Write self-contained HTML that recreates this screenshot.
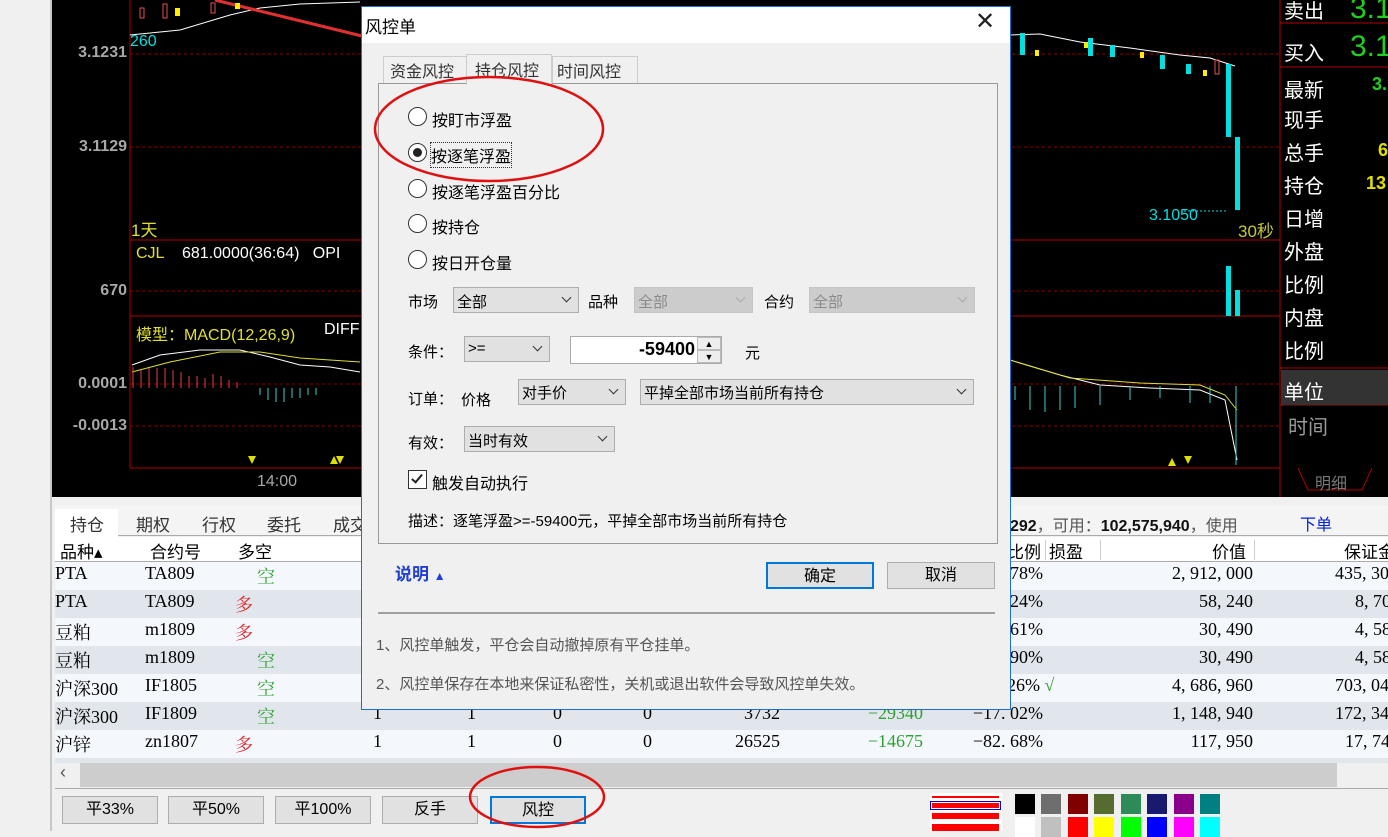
<!DOCTYPE html>
<html><head><meta charset="utf-8">
<style>
*{margin:0;padding:0;box-sizing:border-box}
body{width:1388px;height:831px;position:relative;overflow:hidden;background:#f0f0f0;font-family:"Liberation Sans","Noto Sans CJK SC",sans-serif}
.a{position:absolute;white-space:nowrap}
.ax{color:#a8a8a8;font-weight:bold;font-size:16px;text-align:right;width:80px}
.rl{color:#fff;font-size:20px;left:1284px}
.serif{font-family:"Liberation Serif","Noto Serif CJK SC",serif}
.row{position:absolute;left:55px;width:1333px;height:28px;font-size:18px;overflow:hidden}
.row span{position:absolute;top:1px;white-space:nowrap}
.dk{font-size:15px;color:#000}
.sel{position:absolute;height:26px;background:#e1e1e1;border:1px solid #adadad;font-size:15px;padding:3px 0 0 3px;white-space:nowrap}
.sel i{position:absolute;right:8px;top:6px;width:7px;height:7px;border-right:1.3px solid #333;border-bottom:1.3px solid #333;transform:rotate(45deg)}
.dis{background:#ccc;color:#8a8a8a;border-color:#c4c4c4}
.dis i{border-color:#aaa}
.rad{position:absolute;left:408px;width:19px;height:19px;border:1px solid #333;border-radius:50%;background:#fff}
.btn{position:absolute;height:28px;background:#e1e1e1;border:1px solid #adadad;font-size:16px;text-align:center;line-height:26px}
.sw{position:absolute;width:20px;height:20px}
</style></head><body>
<div class="a" style="left:50px;top:0;width:2px;height:831px;background:#c8c8c8"></div>
<div class="a" style="left:52px;top:0;width:1336px;height:497px;background:#000"></div>
<svg class="a" style="left:0;top:0" width="1388" height="497">
<g stroke="#b00000" stroke-width="1">
<line x1="130" y1="0" x2="130" y2="468"/>
<line x1="130" y1="240" x2="1280" y2="240"/>
<line x1="130" y1="316" x2="1280" y2="316"/>
<line x1="130" y1="468" x2="1280" y2="468"/>
<line x1="1280" y1="0" x2="1280" y2="497"/>
<line x1="1280" y1="23" x2="1388" y2="23"/>
<line x1="1280" y1="67" x2="1388" y2="67"/>
<line x1="1280" y1="368" x2="1388" y2="368"/>
<line x1="1280" y1="405" x2="1388" y2="405"/>
</g>
<g stroke="#8a0000" stroke-dasharray="3,3">
<line x1="130" y1="54" x2="1280" y2="54"/><line x1="130" y1="147" x2="1280" y2="147"/>
<line x1="130" y1="291" x2="1280" y2="291"/><line x1="130" y1="384" x2="1280" y2="384"/><line x1="130" y1="426" x2="1280" y2="426"/>
</g>
<polyline points="130,35 180,30 230,15 260,8 300,4 360,2" stroke="#fff" fill="none"/>
<line x1="215" y1="0" x2="362" y2="36" stroke="#e03030" stroke-width="3"/>
<polyline points="1010,35 1040,34 1080,42 1130,48 1180,55 1210,58 1235,66" stroke="#fff" fill="none"/>
<g fill="#00e0e0">
<rect x="1226" y="64" width="5" height="73"/><rect x="1235" y="137" width="5" height="73"/>
<rect x="1226" y="266" width="5" height="50"/><rect x="1235" y="290" width="5" height="26"/>
<rect x="1020" y="33" width="5" height="22"/><rect x="1088" y="38" width="5" height="18"/><rect x="1186" y="64" width="5" height="10"/>
<rect x="1110" y="45" width="5" height="12"/><rect x="1160" y="55" width="5" height="14"/>
</g>
<g fill="#ffee00"><rect x="1035" y="50" width="4" height="6"/><rect x="1084" y="42" width="4" height="6"/><rect x="1203" y="70" width="4" height="6"/><rect x="175" y="8" width="5" height="8"/><rect x="235" y="3" width="5" height="6"/><rect x="1140" y="52" width="4" height="6"/></g>
<g stroke="#e05050" fill="none"><rect x="140" y="8" width="4" height="10"/><rect x="163" y="4" width="4" height="14"/><rect x="211" y="3" width="4" height="10"/><rect x="1215" y="60" width="4" height="14"/></g>
<line x1="1184" y1="211" x2="1228" y2="211" stroke="#00e0e0" stroke-dasharray="2,2"/>
<polyline points="132,365 160,355 200,350 240,350 270,357 300,365 330,367 360,372" stroke="#fff" fill="none"/>
<polyline points="132,372 170,362 220,352 260,352 300,358 360,362" stroke="#dddd30" fill="none"/>
<polyline points="1010,360 1060,375 1100,385 1150,388 1200,390 1225,400 1237,460" stroke="#fff" fill="none"/>
<polyline points="1010,360 1070,378 1140,383 1200,385 1225,395 1237,410" stroke="#dddd30" fill="none"/>
<g stroke="#e04040"><line x1="133" y1="367" x2="133" y2="388"/><line x1="141" y1="370" x2="141" y2="388"/><line x1="149" y1="368" x2="149" y2="388"/><line x1="157" y1="368" x2="157" y2="388"/><line x1="165" y1="368" x2="165" y2="388"/><line x1="173" y1="370" x2="173" y2="388"/><line x1="181" y1="372" x2="181" y2="388"/><line x1="189" y1="376" x2="189" y2="388"/><line x1="197" y1="376" x2="197" y2="388"/><line x1="205" y1="378" x2="205" y2="388"/><line x1="213" y1="374" x2="213" y2="388"/><line x1="221" y1="376" x2="221" y2="388"/><line x1="229" y1="380" x2="229" y2="388"/><line x1="237" y1="382" x2="237" y2="388"/></g>
<g stroke="#40d0d0"><line x1="260" y1="388" x2="260" y2="395"/><line x1="268" y1="388" x2="268" y2="400"/><line x1="276" y1="388" x2="276" y2="402"/><line x1="284" y1="388" x2="284" y2="402"/><line x1="292" y1="388" x2="292" y2="398"/><line x1="300" y1="388" x2="300" y2="398"/><line x1="308" y1="388" x2="308" y2="395"/><line x1="316" y1="388" x2="316" y2="395"/>
<line x1="1015" y1="386" x2="1015" y2="400"/><line x1="1030" y1="386" x2="1030" y2="410"/><line x1="1045" y1="386" x2="1045" y2="412"/><line x1="1060" y1="386" x2="1060" y2="410"/><line x1="1075" y1="386" x2="1075" y2="408"/><line x1="1100" y1="386" x2="1100" y2="405"/><line x1="1130" y1="386" x2="1130" y2="400"/><line x1="1160" y1="386" x2="1160" y2="398"/><line x1="1190" y1="386" x2="1190" y2="403"/><line x1="1210" y1="386" x2="1210" y2="403"/><line x1="1236" y1="386" x2="1236" y2="465"/></g>
<g fill="#e0e000"><polygon points="248,456 256,456 252,464"/><polygon points="330,464 338,464 334,456"/><polygon points="336,456 344,456 340,464"/><polygon points="1168,466 1176,466 1172,458"/><polygon points="1184,456 1192,456 1188,464"/></g>
<polyline points="1298,468 1308,490 1362,490 1372,468" stroke="#b00000" fill="none"/>
</svg>
<div class="a ax" style="left:47px;top:44px">3.1231</div>
<div class="a ax" style="left:47px;top:138px">3.1129</div>
<div class="a ax" style="left:47px;top:282px">670</div>
<div class="a ax" style="left:47px;top:375px">0.0001</div>
<div class="a ax" style="left:47px;top:417px">-0.0013</div>
<div class="a" style="left:130px;top:33px;color:#00e0e0;font-size:16px">260</div>
<div class="a" style="left:131px;top:216px;color:#e0e030;font-size:17px">1天</div>
<div class="a" style="left:136px;top:245px;color:#e0e030;font-size:16px">CJL</div>
<div class="a" style="left:182px;top:245px;color:#fff;font-size:16px">681.0000(36:64) &nbsp;&nbsp;OPI</div>
<div class="a" style="left:136px;top:321px;color:#e0e030;font-size:16px">模型：MACD(12,26,9)</div>
<div class="a" style="left:324px;top:321px;color:#fff;font-size:16px">DIFF</div>
<div class="a" style="left:257px;top:473px;color:#a8a8a8;font-size:16px">14:00</div>
<div class="a" style="left:1149px;top:207px;color:#00e0e0;font-size:16px">3.1050</div>
<div class="a" style="left:1238px;top:217px;color:#c8c830;font-size:17px">30秒</div>
<div class="a" style="left:1281px;top:370px;width:107px;height:35px;background:#333"></div>
<div class="a rl" style="top:-5px">卖出</div>
<div class="a rl" style="top:37px">买入</div>
<div class="a rl" style="top:74px">最新</div>
<div class="a rl" style="top:104px">现手</div>
<div class="a rl" style="top:137px">总手</div>
<div class="a rl" style="top:170px">持仓</div>
<div class="a rl" style="top:203px">日增</div>
<div class="a rl" style="top:236px">外盘</div>
<div class="a rl" style="top:269px">比例</div>
<div class="a rl" style="top:302px">内盘</div>
<div class="a rl" style="top:335px">比例</div>
<div class="a rl" style="top:376px">单位</div>
<div class="a rl" style="top:411px;color:#999;left:1288px">时间</div>
<div class="a" style="left:1350px;top:-8px;color:#20d020;font-size:30px">3.1</div>
<div class="a" style="left:1350px;top:30px;color:#20d020;font-size:30px">3.1</div>
<div class="a" style="left:1372px;top:74px;color:#20d020;font-size:18px;font-weight:bold">3.</div>
<div class="a" style="left:1378px;top:140px;color:#e0e000;font-size:18px;font-weight:bold">6</div>
<div class="a" style="left:1366px;top:173px;color:#e0e000;font-size:18px;font-weight:bold">13</div>
<div class="a" style="left:1315px;top:470px;color:#777;font-size:16px">明细</div>

<div class="a" style="left:52px;top:497px;width:1336px;height:334px;background:#f0f0f0"></div>
<div class="a" style="left:55px;top:505px;width:1333px;height:31px;background:#f4f4f4;border-bottom:1px solid #aaa"></div>
<div class="a" style="left:55px;top:509px;width:63px;height:28px;background:#fff"></div>
<div class="a" style="left:70px;top:511px;font-size:17px;color:#333">持仓</div>
<div class="a" style="left:136px;top:511px;font-size:17px;color:#333">期权</div>
<div class="a" style="left:202px;top:511px;font-size:17px;color:#333">行权</div>
<div class="a" style="left:267px;top:511px;font-size:17px;color:#333">委托</div>
<div class="a" style="left:333px;top:511px;font-size:17px;color:#333">成交</div>
<div class="a" style="left:1010px;top:512px;font-size:16px;color:#555"><b style="color:#111">292</b>，可用：<b style="color:#111">102,575,940</b>，使用</div>
<div class="a" style="left:1300px;top:511px;font-size:16px;color:#0020e0">下单</div>
<div class="a" style="left:55px;top:537px;width:1333px;height:25px;background:#fff;border-bottom:1px solid #aaa"></div>
<div class="a" style="left:60px;top:538px;font-size:17px">品种▴</div>
<div class="a" style="left:150px;top:538px;font-size:17px">合约号</div>
<div class="a" style="left:238px;top:538px;font-size:17px">多空</div>
<div class="a" style="left:1007px;top:538px;font-size:17px">比例</div>
<div class="a" style="left:1049px;top:538px;font-size:17px">损盈</div>
<div class="a" style="left:1212px;top:538px;font-size:17px">价值</div>
<div class="a" style="left:1344px;top:538px;font-size:17px">保证金</div>
<div class="a" style="left:1045px;top:540px;width:1px;height:20px;background:#ccc"></div>
<div class="a" style="left:1100px;top:540px;width:1px;height:20px;background:#ccc"></div>
<div class="a" style="left:1254px;top:540px;width:1px;height:20px;background:#ccc"></div>
<div class="serif">
<div class="row" style="top:562px;background:#f4f7fc"><span style="left:0">PTA</span><span style="left:90px">TA809</span><span style="left:202px;color:#30a030">空</span><span style="right:345px">78%</span><span style="right:135px">2, 912, 000</span><span style="left:1280px">435, 30</span></div>
<div class="row" style="top:590px;background:#e1e6ec"><span style="left:0">PTA</span><span style="left:90px">TA809</span><span style="left:180px;color:#e02020">多</span><span style="right:345px">24%</span><span style="right:135px">58, 240</span><span style="left:1300px">8, 70</span></div>
<div class="row" style="top:618px;background:#f4f7fc"><span style="left:0">豆粕</span><span style="left:90px">m1809</span><span style="left:180px;color:#e02020">多</span><span style="right:345px">61%</span><span style="right:135px">30, 490</span><span style="left:1300px">4, 58</span></div>
<div class="row" style="top:646px;background:#e1e6ec"><span style="left:0">豆粕</span><span style="left:90px">m1809</span><span style="left:202px;color:#30a030">空</span><span style="right:345px">90%</span><span style="right:135px">30, 490</span><span style="left:1300px">4, 58</span></div>
<div class="row" style="top:674px;background:#f4f7fc"><span style="left:0">沪深300</span><span style="left:90px">IF1805</span><span style="left:202px;color:#30a030">空</span><span style="left:952px">26% <b style="color:#30a030;font-weight:normal">√</b></span><span style="right:135px">4, 686, 960</span><span style="left:1280px">703, 04</span></div>
<div class="row" style="top:702px;background:#e1e6ec"><span style="left:0">沪深300</span><span style="left:90px">IF1809</span><span style="left:202px;color:#30a030">空</span><span style="left:318px">1</span><span style="left:412px">1</span><span style="left:498px">0</span><span style="left:588px">0</span><span style="right:608px">3732</span><span style="right:465px;color:#30a030">−29340</span><span style="right:345px">−17. 02%</span><span style="right:135px">1, 148, 940</span><span style="left:1280px">172, 34</span></div>
<div class="row" style="top:730px;background:#f4f7fc"><span style="left:0">沪锌</span><span style="left:90px">zn1807</span><span style="left:180px;color:#e02020">多</span><span style="left:318px">1</span><span style="left:412px">1</span><span style="left:498px">0</span><span style="left:588px">0</span><span style="right:608px">26525</span><span style="right:465px;color:#30a030">−14675</span><span style="right:345px">−82. 68%</span><span style="right:135px">117, 950</span><span style="left:1290px">17, 74</span></div>
<div class="row" style="top:758px;background:#e1e6ec;height:6px"></div>
</div>
<div class="a" style="left:55px;top:763px;width:1333px;height:24px;background:#f0f0f0"></div>
<div class="a" style="left:80px;top:763px;width:1257px;height:24px;background:#cdcdcd"></div>
<div class="a" style="left:60px;top:762px;font-size:18px;color:#555">‹</div>
<div class="a" style="left:55px;top:788px;width:1333px;height:1px;background:#aaa"></div>
<div class="btn" style="left:62px;top:796px;width:96px">平33%</div>
<div class="btn" style="left:168px;top:796px;width:96px">平50%</div>
<div class="btn" style="left:275px;top:796px;width:96px">平100%</div>
<div class="btn" style="left:382px;top:796px;width:96px">反手</div>
<div class="btn" style="left:490px;top:796px;width:96px;border:2px solid #0078d7">风控</div>
<div class="a" style="left:930px;top:793px;width:72px;height:38px;background:#fff"></div>
<div class="a" style="left:932px;top:796px;width:67px;height:2px;background:#f00"></div>
<div class="a" style="left:930px;top:801px;width:71px;height:9px;border:1px solid #0000e0;padding:1px"><div style="background:#f00;height:5px"></div></div>
<div class="a" style="left:932px;top:813px;width:67px;height:6px;background:#f00"></div>
<div class="a" style="left:932px;top:824px;width:67px;height:7px;background:#f00"></div>
<div class="sw" style="left:1015px;top:794px;background:#000"></div><div class="sw" style="left:1041px;top:794px;background:#6e6e6e"></div><div class="sw" style="left:1068px;top:794px;background:#800000"></div><div class="sw" style="left:1094px;top:794px;background:#556b2f"></div><div class="sw" style="left:1121px;top:794px;background:#2e8b57"></div><div class="sw" style="left:1147px;top:794px;background:#191970"></div><div class="sw" style="left:1174px;top:794px;background:#8b008b"></div><div class="sw" style="left:1200px;top:794px;background:#008080"></div>
<div class="sw" style="left:1015px;top:817px;background:#fff"></div><div class="sw" style="left:1041px;top:817px;background:#c0c0c0"></div><div class="sw" style="left:1068px;top:817px;background:#f00"></div><div class="sw" style="left:1094px;top:817px;background:#ff0"></div><div class="sw" style="left:1121px;top:817px;background:#0f0"></div><div class="sw" style="left:1147px;top:817px;background:#00f"></div><div class="sw" style="left:1174px;top:817px;background:#f0f"></div><div class="sw" style="left:1200px;top:817px;background:#0ff"></div>

<div class="a" style="left:361px;top:6px;width:650px;height:704px;background:#f0f0f0;border:1px solid #1a6fd0"></div>
<div class="a" style="left:362px;top:7px;width:648px;height:36px;background:#fff"></div>
<div class="a" style="left:365px;top:13px;font-size:17px">风控单</div>
<div class="a" style="left:975px;top:7px;font-size:24px;font-weight:100;color:#222">✕</div>
<div class="a" style="left:378px;top:83px;width:620px;height:461px;border:1px solid #999"></div>
<div class="a" style="left:383px;top:56px;width:84px;height:27px;background:#f0f0f0;border:1px solid #ccc;border-bottom:none"></div>
<div class="a" style="left:466px;top:54px;width:86px;height:31px;background:#f0f0f0;border:1px solid #ccc;border-bottom:none"></div>
<div class="a" style="left:552px;top:56px;width:86px;height:27px;background:#f0f0f0;border:1px solid #ccc;border-bottom:none"></div>
<div class="a" style="left:390px;top:58px;font-size:16px;color:#333">资金风控</div>
<div class="a" style="left:475px;top:57px;font-size:16px;color:#333">持仓风控</div>
<div class="a" style="left:557px;top:58px;font-size:16px;color:#333">时间风控</div>
<div class="rad" style="top:107px"></div>
<div class="rad" style="top:143px"><div style="position:absolute;left:4px;top:4px;width:9px;height:9px;border-radius:50%;background:#222"></div></div>
<div class="rad" style="top:179px"></div>
<div class="rad" style="top:214px"></div>
<div class="rad" style="top:250px"></div>
<div class="a" style="left:432px;top:107px;font-size:16px">按盯市浮盈</div>
<div class="a" style="left:431px;top:143px;font-size:16px;outline:1px dotted #333">按逐笔浮盈</div>
<div class="a" style="left:432px;top:179px;font-size:16px">按逐笔浮盈百分比</div>
<div class="a" style="left:432px;top:214px;font-size:16px">按持仓</div>
<div class="a" style="left:432px;top:250px;font-size:16px">按日开仓量</div>
<div class="a dk" style="left:408px;top:291px">市场</div>
<div class="sel" style="left:453px;top:287px;width:126px">全部<i></i></div>
<div class="a dk" style="left:588px;top:291px">品种</div>
<div class="sel dis" style="left:634px;top:287px;width:119px">全部<i></i></div>
<div class="a dk" style="left:764px;top:291px">合约</div>
<div class="sel dis" style="left:809px;top:287px;width:166px">全部<i></i></div>
<div class="a dk" style="left:408px;top:341px">条件：</div>
<div class="sel" style="left:464px;top:336px;width:86px">&gt;=<i></i></div>
<div class="a" style="left:570px;top:336px;width:152px;height:28px;background:#fff;border:1px solid #aaa"></div>
<div class="a" style="left:570px;top:339px;width:125px;text-align:right;font-size:18px;font-weight:bold">-59400</div>
<div class="a" style="left:697px;top:337px;width:24px;height:13px;background:#eee;border:1px solid #bbb;font-size:9px;text-align:center;line-height:12px">▲</div>
<div class="a" style="left:697px;top:350px;width:24px;height:13px;background:#eee;border:1px solid #bbb;font-size:9px;text-align:center;line-height:12px">▼</div>
<div class="a dk" style="left:745px;top:342px">元</div>
<div class="a dk" style="left:408px;top:388px">订单：</div>
<div class="a dk" style="left:461px;top:389px">价格</div>
<div class="sel" style="left:518px;top:379px;width:108px;padding-top:2px">对手价<i></i></div>
<div class="sel" style="left:640px;top:379px;width:334px;padding-top:2px">平掉全部市场当前所有持仓<i></i></div>
<div class="a dk" style="left:408px;top:432px">有效：</div>
<div class="sel" style="left:464px;top:426px;width:151px">当时有效<i></i></div>
<div class="a" style="left:408px;top:470px;width:19px;height:19px;border:1px solid #333;background:#fff"><div style="position:absolute;left:5px;top:1px;width:6px;height:11px;border-right:2px solid #222;border-bottom:2px solid #222;transform:rotate(40deg)"></div></div>
<div class="a dk" style="left:432px;top:470px;font-size:16px">触发自动执行</div>
<div class="a dk" style="left:408px;top:510px">描述：逐笔浮盈&gt;=-59400元，平掉全部市场当前所有持仓</div>
<div class="a" style="left:395px;top:560px;font-size:17px;font-weight:bold;color:#2040d0">说明 <span style="font-size:12px">▲</span></div>
<div class="btn" style="left:766px;top:562px;width:108px;height:27px;border:2px solid #0078d7">确定</div>
<div class="btn" style="left:887px;top:562px;width:108px;height:27px">取消</div>
<div class="a" style="left:378px;top:612px;width:617px;height:2px;background:#a0a0a0"></div>
<div class="a" style="left:376px;top:634px;font-size:15px;color:#555">1、风控单触发，平仓会自动撤掉原有平仓挂单。</div>
<div class="a" style="left:376px;top:673px;font-size:15px;color:#555">2、风控单保存在本地来保证私密性，关机或退出软件会导致风控单失效。</div>

<svg class="a" style="left:0;top:0" width="1388" height="831">
<ellipse cx="489" cy="129" rx="114" ry="52" stroke="#e01010" stroke-width="2.5" fill="none"/>
<ellipse cx="537" cy="797" rx="67" ry="30" stroke="#e01010" stroke-width="2.5" fill="none"/>
</svg>
</body></html>
